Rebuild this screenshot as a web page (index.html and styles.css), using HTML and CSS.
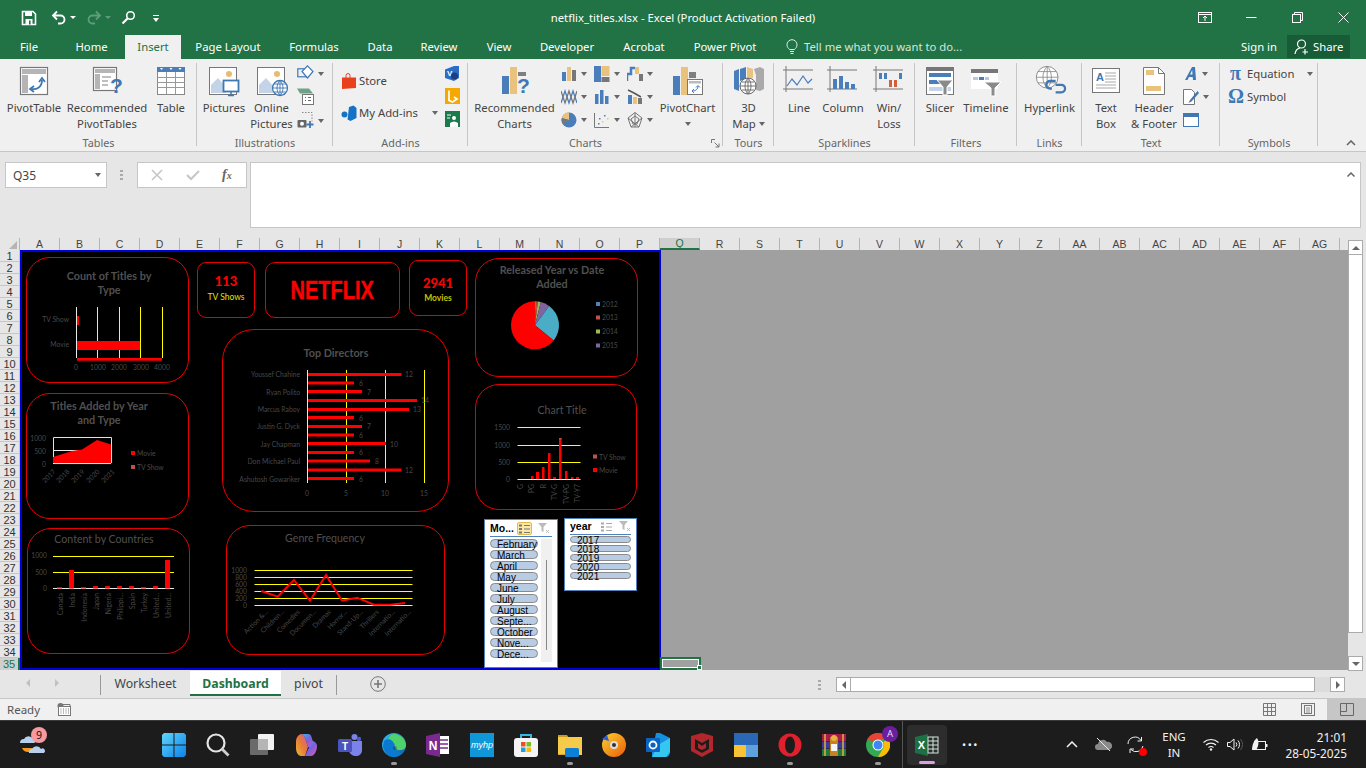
FILE: index.html
```html
<!DOCTYPE html>
<html lang="en">
<head>
<meta charset="utf-8">
<title>netflix_titles.xlsx - Excel</title>
<link rel="stylesheet" href="styles.css">
</head>
<body>
<div class="app">

<header class="titlebar">
  <div class="qat">
    <svg class="q-save" width="16" height="16" viewBox="0 0 16 16"><path d="M1.500 1.500h10.500l2.500 2.500v10.500h-13z" fill="none" stroke="#fff" stroke-width="1.600"/><rect x="4" y="1.500" width="7" height="4.500" fill="#fff"/><rect x="4.500" y="9" width="7" height="5.500" fill="#fff"/><rect x="8" y="10.500" width="1.600" height="4" fill="#217346"/></svg>
    <svg class="q-undo" width="16" height="16" viewBox="0 0 16 16"><path d="M6 1.500 2 5.500l4 4M2.500 5.500h7a4 4 0 0 1 0 8H7" fill="none" stroke="#fff" stroke-width="1.800"/></svg>
    <span class="q-caret"></span>
    <svg class="q-redo" width="16" height="16" viewBox="0 0 16 16"><path d="M10 1.500l4 4-4 4M13.500 5.500h-7a4 4 0 0 0 0 8H9" fill="none" stroke="#5f9c7c" stroke-width="1.800"/></svg>
    <span class="q-caret dim"></span>
    <svg class="q-touch" width="15" height="15" viewBox="0 0 15 15"><circle cx="9.500" cy="5.500" r="3.800" fill="none" stroke="#fff" stroke-width="1.600"/><path d="M6.500 8.500 1.500 13.500" stroke="#fff" stroke-width="2.200"/></svg>
    <svg class="q-more" width="8" height="8" viewBox="0 0 8 8"><path d="M1 0.500h6" stroke="#fff"/><path d="M1 3h6L4 7z" fill="#fff"/></svg>
  </div>
  <div class="doc-title">netflix_titles.xlsx - Excel (Product Activation Failed)</div>
  <div class="winctl">
    <svg width="14" height="11" viewBox="0 0 14 11"><rect x=".5" y=".5" width="13" height="10" fill="none" stroke="#fff"/><path d="M.5 2.500h13M7 9V4M5 6l2-2 2 2" fill="none" stroke="#fff"/></svg>
    <svg width="11" height="11" viewBox="0 0 11 11"><path d="M0 5.500h10.500" stroke="#fff"/></svg>
    <svg width="11" height="11" viewBox="0 0 11 11"><rect x=".5" y="2.500" width="8" height="8" fill="none" stroke="#fff"/><path d="M2.500 2.500v-2h8v8h-2" fill="none" stroke="#fff"/></svg>
    <svg width="11" height="11" viewBox="0 0 11 11"><path d="M.5.500l10 10M10.500.500l-10 10" stroke="#fff"/></svg>
  </div>
</header>

<nav class="tabs">
  <span class="tab">File</span><span class="tab">Home</span><span class="tab tab-on">Insert</span><span class="tab">Page Layout</span><span class="tab">Formulas</span><span class="tab">Data</span><span class="tab">Review</span><span class="tab">View</span><span class="tab">Developer</span><span class="tab">Acrobat</span><span class="tab">Power Pivot</span>
  <span class="tell"><svg width="12" height="16" viewBox="0 0 12 16"><path d="M3.500 10.500C2 9 1 8 1 5.700a5 5 0 0 1 10 0c0 2.300-1 3.300-2.500 4.800zM4 12.500h4M4.500 14.500h3" fill="none" stroke="#dfeee6" stroke-width="1"/></svg>Tell me what you want to do...</span>
  <span class="signin">Sign in</span>
  <span class="share"><svg width="16" height="16" viewBox="0 0 16 16"><circle cx="7.500" cy="5" r="4" fill="none" stroke="#fff" stroke-width="1.200"/><path d="M1 15c.5-3.500 2.500-5.500 5-6M11 10v5.500M8.500 13h5.500" fill="none" stroke="#fff" stroke-width="1.200"/></svg>Share</span>
</nav>

<section class="ribbon">
  <div class="group g-tables">
    <div class="body">
      <div class="big w68"><svg class="ic" width="32" height="32" viewBox="0 0 32 32"><rect x="2.500" y="2.500" width="27" height="27" fill="#fff" stroke="#777" stroke-width="1.200"/><rect x="4" y="4" width="24" height="5" fill="#b5b5b5"/><rect x="4" y="10" width="6" height="18" fill="#b5b5b5"/><path d="M13 24c6 1 11-2 11-9" fill="none" stroke="#3f78b5" stroke-width="1.800"/><path d="M21 17l3-4 3 4M16 21l-4 3 4 3" fill="none" stroke="#3f78b5" stroke-width="1.800"/></svg><span>PivotTable</span></div>
      <div class="big w78"><svg class="ic" width="32" height="32" viewBox="0 0 32 32"><rect x="2.500" y="2.500" width="23" height="23" fill="#fff" stroke="#777" stroke-width="1.200"/><rect x="4" y="4" width="20" height="4" fill="#b5b5b5"/><rect x="4" y="9" width="5" height="15" fill="#b5b5b5"/><path d="M11 12h9M11 16h6M11 20h6" stroke="#aaa" stroke-width="1.500"/><text class="ques" x="19" y="28">?</text></svg><span>Recommended<br>PivotTables</span></div>
      <div class="big w50"><svg class="ic" width="32" height="32" viewBox="0 0 32 32"><rect x="2.500" y="2.500" width="27" height="27" fill="#fff" stroke="#888"/><rect x="2" y="2" width="28" height="5" fill="#4a7ebb"/><path d="M2.500 12.500h27M2.500 17.500h27M2.500 22.500h27M11.500 7v22M20.500 7v22" stroke="#999"/><path d="M5 3h3L6.500 5zM14.500 3h3L16 5zM23.500 3h3L25 5z" fill="#fff"/></svg><span>Table</span></div>
    </div>
    <div class="glabel">Tables</div>
  </div>

  <div class="group g-illus">
    <div class="body">
      <div class="big w54"><svg class="ic" width="32" height="32" viewBox="0 0 32 32"><rect x="1.500" y="2.500" width="27" height="27" fill="#fff" stroke="#777"/><circle cx="21" cy="9" r="3" fill="#e8bb70"/><path d="M3 28V20l7-7 8 9v6z" fill="#c3d4e8"/><rect x="15.500" y="15.500" width="15" height="11" fill="#fff" stroke="#3f78b5" stroke-width="1.800"/><path d="M20 30.500h6M23 27v3" stroke="#3f78b5" stroke-width="1.500"/></svg><span>Pictures</span></div>
      <div class="big w41"><svg class="ic" width="32" height="32" viewBox="0 0 32 32"><rect x="1.500" y="2.500" width="27" height="27" fill="#fff" stroke="#777"/><circle cx="21" cy="9" r="3" fill="#e8bb70"/><path d="M3 28V20l7-7 8 9v6z" fill="#c3d4e8"/><circle cx="24" cy="23" r="7.500" fill="#fff" stroke="#3f78b5" stroke-width="1.300"/><path d="M16.500 23h15M24 15.500v15M18 19h12M18 27h12M24 15.500c-4 4-4 11 0 15M24 15.500c4 4 4 11 0 15" fill="none" stroke="#3f78b5" stroke-width=".9"/></svg><span>Online<br>Pictures</span></div>
      <div class="stack s-illus">
        <div class="si"><svg width="17" height="17" viewBox="0 0 17 17"><rect x=".8" y="3.800" width="9" height="8" fill="none" stroke="#3f78b5" stroke-width="1.200"/><path d="M10.500.8 16 6.500 10.500 13 5 6.500z" fill="#fff" stroke="#3f78b5" stroke-width="1.200"/></svg><i class="car"></i></div>
        <div class="si"><svg width="17" height="17" viewBox="0 0 17 17"><path d="M0 .5h12l4 5H3z" fill="#6fa287"/><rect x="5.500" y="6.500" width="11" height="10" fill="#fff" stroke="#777"/><path d="M8 9.500h1M11 9.500h3M8 12.500h1M11 12.500h3" stroke="#666"/></svg></div>
        <div class="si"><svg width="17" height="17" viewBox="0 0 17 17"><path d="M5 .5h10v9" fill="none" stroke="#888" stroke-dasharray="1.500 1.500"/><rect x=".5" y="8" width="9" height="7.500" rx="1" fill="#666"/><circle cx="5" cy="11.700" r="2" fill="#fff"/><path d="M13 9v7M9.500 12.500h7" stroke="#3f78b5" stroke-width="1.800"/></svg><i class="car"></i></div>
      </div>
    </div>
    <div class="glabel">Illustrations</div>
  </div>

  <div class="group g-addins">
    <div class="body">
      <div class="stack s-addin">
        <div class="row-btn"><svg width="16" height="17" viewBox="0 0 16 17"><path d="M1 4.500h14v10.500l-14 1z" fill="#e8401c"/><path d="M5 5V2.500a2 2 0 0 1 4 0V5" fill="none" stroke="#e8401c"/></svg><span>Store</span></div>
        <div class="row-btn"><svg width="16" height="17" viewBox="0 0 16 17"><path d="M8 2l4.500-1.500L15.500 3v10l-6 3-3-1.500z" fill="#1672c4"/><circle cx="3.500" cy="9.500" r="3" fill="#1672c4"/></svg><span>My Add-ins</span><i class="car c-addin"></i></div>
      </div>
      <div class="stack s-apps">
        <svg width="15" height="15" viewBox="0 0 15 15"><path d="M0 3.500 9 0h5v12l-5 3-9-3z" fill="#2b6cc4"/><text class="vtxt" x="2" y="10">V</text><circle cx="9.500" cy="10" r="3.500" fill="#1d3f80"/></svg>
        <svg width="15" height="16" viewBox="0 0 15 16"><rect width="15" height="16" fill="#f5a800"/><path d="M4 2.500v10l3.500 1.500 4.500-3-3-2" fill="none" stroke="#fff" stroke-width="1.700"/></svg>
        <svg width="15" height="16" viewBox="0 0 15 16"><rect width="15" height="16" fill="#1a7a4e"/><circle cx="9" cy="7" r="2" fill="#fff"/><path d="M5 16v-4q4-3 8 0v4z" fill="#fff"/><path d="M2 4h4M2 7h3" stroke="#fff"/></svg>
      </div>
    </div>
    <div class="glabel">Add-ins</div>
  </div>

  <div class="group g-charts">
    <div class="body">
      <div class="big w94"><svg class="ic" width="32" height="32" viewBox="0 0 32 32"><rect x="3" y="11" width="7" height="18" fill="#4a7ebb"/><rect x="11" y="2" width="7" height="27" fill="#e9c27d"/><rect x="19" y="7" width="8" height="4" fill="#7f7f7f"/><text class="ques" x="18" y="28">?</text></svg><span>Recommended<br>Charts</span></div>
      <div class="mini-grid">
        <div class="si"><svg width="16" height="16" viewBox="0 0 16 16"><rect x="1" y="6" width="4" height="9" fill="#4a7ebb"/><rect x="6" y="1" width="4" height="14" fill="#e9c27d"/><rect x="11" y="4" width="4" height="11" fill="#777"/></svg><i class="car"></i></div>
        <div class="si"><svg width="16" height="16" viewBox="0 0 16 16"><rect y="0" width="7" height="16" fill="#4a7ebb"/><rect x="7.500" y="0" width="8" height="10" fill="#e9c27d"/><rect x="7.500" y="11" width="8" height="5" fill="#777"/></svg><i class="car"></i></div>
        <div class="si"><svg width="16" height="16" viewBox="0 0 16 16"><path d="M0 15V8h4V2h4" fill="none" stroke="#4a7ebb" stroke-width="2.500"/><rect x="8" y="1" width="4" height="7" fill="#e9c27d"/><rect x="12" y="8" width="4" height="7" fill="#777"/></svg><i class="car"></i></div>
        <div class="si"><svg width="16" height="16" viewBox="0 0 16 16"><path d="M0 14 4 2l4 12 4-12 4 12" fill="none" stroke="#4a7ebb" stroke-width="1.300"/><path d="M0 2l4 12 4-12 4 12 4-12" fill="none" stroke="#777" stroke-width="1.300"/></svg><i class="car"></i></div>
        <div class="si"><svg width="16" height="16" viewBox="0 0 16 16"><path d="M1 5h3.500v10H1zM6 1h3.500v14H6zM11 7h3.500v8H11z" fill="#4a7ebb"/></svg><i class="car"></i></div>
        <div class="si"><svg width="16" height="16" viewBox="0 0 16 16"><rect x="1" y="6" width="4" height="9" fill="#4a7ebb"/><rect x="6" y="8" width="4" height="7" fill="#e9c27d"/><rect x="11" y="9" width="4" height="6" fill="#777"/><path d="M1 1l6 3 7 4" fill="none" stroke="#555" stroke-width="1.500"/></svg><i class="car"></i></div>
        <div class="si"><svg width="16" height="16" viewBox="0 0 16 16"><circle cx="8" cy="8" r="7.500" fill="#4a7ebb"/><path d="M8 8V.5A7.500 7.500 0 0 0 .8 6z" fill="#e9c27d"/><path d="M8 8 .8 6a7.500 7.500 0 0 0 1.200 6.500z" fill="#777"/></svg><i class="car"></i></div>
        <div class="si"><svg width="16" height="16" viewBox="0 0 16 16"><path d="M.5 1v14.500H15" fill="none" stroke="#777"/><path d="M5 6h1.500v1.500H5zM10 3h1.500v1.500H10z" fill="#4a7ebb"/><path d="M8 9h1.500v1.500H8zM13 6h1.500v1.500H13z" fill="#e9c27d"/><path d="M4 11h1.500v1.500H4z" fill="#4a7ebb"/></svg><i class="car"></i></div>
        <div class="si"><svg width="16" height="16" viewBox="0 0 16 16"><path d="M8 .5 15 6l-3 9H4L1 6zM8 .5V15M1 6l11 9M15 6 4 15" fill="none" stroke="#777"/><path d="M8 4l4 3-2 5H6L4 7z" fill="none" stroke="#777"/></svg><i class="car"></i></div>
      </div>
      <div class="big w60"><svg class="ic" width="32" height="32" viewBox="0 0 32 32"><rect x="1" y="11" width="7" height="19" fill="#4a7ebb"/><rect x="9" y="2" width="7" height="28" fill="#e9c27d"/><rect x="17" y="7" width="7" height="6" fill="#7f7f7f"/><rect x="15.500" y="14.500" width="15" height="15" fill="#fff" stroke="#777"/><rect x="17" y="16" width="12" height="2.500" fill="#bbb"/><path d="M20 26c4 0 6-2 6-5M24 22.500l2-2 2 2M22 24l-2 2 2 2" fill="none" stroke="#3f78b5"/></svg><span class="pc">PivotChart<i class="car c-under"></i></span></div>
    </div>
    <div class="glabel gl-charts">Charts<svg class="launcher" width="9" height="9" viewBox="0 0 9 9"><path d="M.5 4V.5H4" fill="none" stroke="#777"/><path d="M8 8 3.500 3.500M8 4.500V8H4.500" fill="none" stroke="#777"/></svg></div>
  </div>

  <div class="group g-tours">
    <div class="body">
      <div class="big wfull"><svg class="ic" width="32" height="32" viewBox="0 0 32 32"><path d="M1 6l5-2v22l-5-2z" fill="#4a7ebb"/><path d="M7 4l6-2v12l-6 2zM7 24h4" fill="#4a7ebb"/><path d="M14 2l6 2v9l-6-1z" fill="#e9c27d"/><path d="M21 4l6-2 4 2v20l-4 2-4-1V10z" fill="#aaa"/><circle cx="15" cy="21" r="8" fill="#fff" stroke="#666"/><path d="M7 21h16M15 13v16M9 17h12M9 25h12M15 13c-4 4-4 12 0 16M15 13c4 4 4 12 0 16" fill="none" stroke="#666" stroke-width=".9"/></svg><span>3D<br>Map<i class="car c-inl"></i></span></div>
    </div>
    <div class="glabel">Tours</div>
  </div>

  <div class="group g-spark">
    <div class="body">
      <div class="big w50"><svg class="ic" width="32" height="32" viewBox="0 0 32 32"><path d="M3 1v26M0 5h30M0 24h30" stroke="#777"/><path d="M4 21l5-7 5 6 6-9 5 7 4-4" fill="none" stroke="#4a7ebb" stroke-width="1.200"/></svg><span>Line</span></div>
      <div class="big w44 sp-col"><svg class="ic" width="32" height="32" viewBox="0 0 32 32"><path d="M3 1v26M0 5h30M0 24h30" stroke="#777"/><path d="M6 14h4v10H6zM12 11h4v13h-4zM18 17h4v7h-4zM24 19h4v5h-4z" fill="#4a7ebb"/></svg><span>Column</span></div>
      <div class="big w46 sp-win"><svg class="ic" width="32" height="32" viewBox="0 0 32 32"><path d="M3 1v26M0 5h30M0 24h30" stroke="#777"/><path d="M6 8h3v6H6zM11 8h3v6h-3zM26 8h3v6h-3z" fill="#4a7ebb"/><path d="M16 15h3v7h-3zM21 15h3v7h-3z" fill="#d2603f"/></svg><span>Win/<br>Loss</span></div>
    </div>
    <div class="glabel">Sparklines</div>
  </div>

  <div class="group g-filters">
    <div class="body">
      <div class="big w50"><svg class="ic" width="32" height="32" viewBox="0 0 32 32"><rect x="2.500" y="2.500" width="27" height="27" fill="#fff" stroke="#777"/><rect x="2" y="2" width="28" height="4" fill="#777"/><rect x="5" y="8" width="22" height="4" fill="#4a7ebb"/><rect x="5" y="15" width="12" height="4" fill="#4a7ebb"/><rect x="5" y="22" width="22" height="4" fill="#c3d4e8"/><path d="M13 15h16l-6 7v8h-4v-8z" fill="#8a8a8a" stroke="#fff"/></svg><span>Slicer</span></div>
      <div class="big w44 ofv"><svg class="ic" width="32" height="32" viewBox="0 0 32 32"><path d="M1 5h27v19H1z" fill="#fff"/><rect x="1" y="4" width="27" height="4" fill="#777"/><path d="M3 12h5v3H3zM15 12h4v3h-4z" fill="#b5c9e0"/><path d="M9 12h5v3H9z" fill="#4a7ebb"/><path d="M14 17h17l-6 6v8h-4v-8z" fill="#8a8a8a" stroke="#fff"/></svg><span>Timeline</span></div>
    </div>
    <div class="glabel">Filters</div>
  </div>

  <div class="group g-links">
    <div class="body">
      <div class="big wfull"><svg class="ic" width="34" height="34" viewBox="0 0 34 34"><circle cx="14" cy="13" r="11.500" fill="#fff" stroke="#888"/><path d="M2.500 13h23M14 1.500v23M4 7h20M4 19h20M14 1.500c-6 6-6 17 0 23M14 1.500c6 6 6 17 0 23" fill="none" stroke="#888" stroke-width=".9"/><path d="M20 26h-2a4 4 0 0 1 0-8h6M24 22h6a4 4 0 0 1 0 8h-6" transform="translate(-1 -1)" fill="none" stroke="#3f78b5" stroke-width="2.400"/></svg><span>Hyperlink</span></div>
    </div>
    <div class="glabel">Links</div>
  </div>

  <div class="group g-text">
    <div class="body">
      <div class="big w48"><svg class="ic" width="32" height="32" viewBox="0 0 32 32"><rect x="2.500" y="3.500" width="27" height="24" fill="#fff" stroke="#777"/><text class="atxt" x="6" y="16">A</text><path d="M15 8h11M15 11h11M15 14h11M15 17h11M6 20h20M6 23h20" stroke="#aaa"/></svg><span>Text<br>Box</span></div>
      <div class="big w48"><svg class="ic" width="32" height="32" viewBox="0 0 32 32"><path d="M5.500 2.500h15l6 6v21h-21z" fill="#fff" stroke="#777"/><path d="M20.500 2.500v6h6" fill="none" stroke="#777"/><rect x="8" y="5" width="8" height="5" fill="#e9c27d"/><rect x="8" y="21" width="15" height="5" fill="#e9c27d"/></svg><span>Header<br>&amp; Footer</span></div>
      <div class="stack s-text">
        <div class="si"><svg width="15" height="15" viewBox="0 0 15 15"><path d="M2 14 9 1h3l1 13h-3l-.3-3H6l-1.500 3zM7 8.500h2.500L9.200 4z" fill="#3f78b5"/></svg><i class="car"></i></div>
        <div class="si"><svg width="16" height="16" viewBox="0 0 16 16"><path d="M.5.500h8l3 3v12h-11z" fill="#fff" stroke="#777"/><path d="M14.500 2 7 11l-1.500 3 3-1.500L16 4z" fill="#3f78b5"/></svg><i class="car"></i></div>
        <div class="si"><svg width="16" height="14" viewBox="0 0 16 14"><rect x=".5" y=".5" width="15" height="13" fill="#fff" stroke="#3f78b5"/><rect width="16" height="4" fill="#3f78b5"/></svg></div>
      </div>
    </div>
    <div class="glabel">Text</div>
  </div>

  <div class="group g-sym">
    <div class="body">
      <div class="stack s-sym">
        <div class="sym-row"><span class="glyph">π</span><span>Equation</span><i class="car"></i></div>
        <div class="sym-row"><span class="glyph">Ω</span><span>Symbol</span></div>
      </div>
    </div>
    <div class="glabel">Symbols</div>
  </div>
  <div class="collapse"><svg width="10" height="6" viewBox="0 0 10 6"><path d="M1 5l4-4 4 4" fill="none" stroke="#666" stroke-width="1.600"/></svg></div>
</section>

<section class="formula">
  <div class="namebox"><span>Q35</span><i class="car"></i></div>
  <div class="grip"></div>
  <div class="fxbox">
    <svg width="12" height="12" viewBox="0 0 12 12"><path d="M1 1l10 10M11 1 1 11" stroke="#c6c6c6" stroke-width="1.600"/></svg>
    <svg width="14" height="12" viewBox="0 0 14 12"><path d="M1 6l4 4 8-8" fill="none" stroke="#c6c6c6" stroke-width="2"/></svg>
    <span class="fx">f<small>x</small></span>
  </div>
  <div class="fbar"><svg width="8" height="5" viewBox="0 0 8 5"><path d="M.5 4.500 4 1l3.500 3.500" fill="none" stroke="#666" stroke-width="1.500"/></svg></div>
</section>

<section class="workarea">
  <div class="sheet">
    <div class="colhead">
      <span class="corner"><i></i></span>
      <span>A</span><span>B</span><span>C</span><span>D</span><span>E</span><span>F</span><span>G</span><span>H</span><span>I</span><span>J</span><span>K</span><span>L</span><span>M</span><span>N</span><span>O</span><span>P</span><span class="sel">Q</span><span>R</span><span>S</span><span>T</span><span>U</span><span>V</span><span>W</span><span>X</span><span>Y</span><span>Z</span><span>AA</span><span>AB</span><span>AC</span><span>AD</span><span>AE</span><span>AF</span><span>AG</span>
    </div>
    <div class="sheetbody">
      <div class="rowhead">
        <span>1</span><span>2</span><span>3</span><span>4</span><span>5</span><span>6</span><span>7</span><span>8</span><span>9</span><span>10</span><span>11</span><span>12</span><span>13</span><span>14</span><span>15</span><span>16</span><span>17</span><span>18</span><span>19</span><span>20</span><span>21</span><span>22</span><span>23</span><span>24</span><span>25</span><span>26</span><span>27</span><span>28</span><span>29</span><span>30</span><span>31</span><span>32</span><span>33</span><span>34</span><span class="sel">35</span>
      </div>
      <div class="grid-area">
        <div class="dash">

          <div class="card c-type"><svg viewBox="26 257 163 126">
            <text class="ttl" x="109" y="280">Count of Titles by</text><text class="ttl" x="109" y="294">Type</text>
            <g class="yel"><path d="M97.500 307v51M119.500 307v51M140.500 307v51M162.500 307v51"/></g>
            <path class="wht" d="M76.500 307v51"/>
            <rect class="red" x="77" y="316" width="2" height="9"/><rect class="red" x="77" y="341" width="63" height="9"/>
            <rect x="77" y="358" width="85" height="3.500" fill="url(#glow)"/>
            <text class="ax end" x="69" y="322">TV Show</text><text class="ax end" x="69" y="347">Movie</text>
            <text class="ax mid" x="76" y="370">0</text><text class="ax mid" x="98" y="370">1000</text><text class="ax mid" x="119" y="370">2000</text><text class="ax mid" x="141" y="370">3000</text><text class="ax mid" x="162" y="370">4000</text>
            <defs><linearGradient id="glow" x1="0" y1="0" x2="0" y2="1"><stop offset=".4" stop-color="#f00"/><stop offset="1" stop-color="#600"/></linearGradient></defs>
          </svg></div>

          <div class="card c-added"><svg viewBox="26 393 163 126">
            <text class="ttl" x="99" y="410">Titles Added by Year</text><text class="ttl" x="99" y="424">and Type</text>
            <path class="yel" d="M53.500 463.500V437.500H111.500V463"/>
            <path class="wht" d="M53 450.500h58"/>
            <path class="red" d="M53 457 72 451l10-1.500L97 440l14 4.500V463H53z"/>
            <path class="wht" d="M53 463.500h58"/>
            <text class="ax end" x="46" y="441">1000</text><text class="ax end" x="46" y="454">500</text><text class="ax end" x="46" y="467">0</text>
            <g class="ax"><text transform="rotate(-45 54 470)" class="end" x="54" y="473">2017</text><text transform="rotate(-45 68 470)" class="end" x="68" y="473">2018</text><text transform="rotate(-45 83 470)" class="end" x="83" y="473">2019</text><text transform="rotate(-45 98 470)" class="end" x="98" y="473">2020</text><text transform="rotate(-45 113 470)" class="end" x="113" y="473">2021</text></g>
            <rect class="red" x="131" y="451" width="4" height="4"/><text class="ax" x="137" y="455.500">Movie</text>
            <rect x="131" y="465" width="4" height="4" fill="#c0504d"/><text class="ax" x="137" y="469.500">TV Show</text>
          </svg></div>

          <div class="card c-country"><svg viewBox="27 528 163 126">
            <text class="ttl thin" x="104" y="543">Content by Countries</text>
            <path class="yel" d="M53 556.500h121M53 572.500h121"/><path class="wht" d="M53 588.500h121"/>
            <text class="ax end" x="47" y="558">1000</text><text class="ax end" x="47" y="574.500">500</text><text class="ax end" x="47" y="591">0</text>
            <g class="red"><rect x="57" y="587" width="5" height="1.500"/><rect x="69" y="570" width="5" height="18.500"/><rect x="81" y="587" width="5" height="1.500"/><rect x="93" y="586" width="5" height="2.500"/><rect x="105" y="586" width="5" height="2.500"/><rect x="117" y="586" width="5" height="2.500"/><rect x="129" y="586" width="5" height="2.500"/><rect x="141" y="587" width="5" height="1.500"/><rect x="153" y="586" width="5" height="2.500"/><rect x="165" y="560" width="5" height="28.500"/></g>
            <g class="ax end"><text transform="rotate(-90 63 593)" x="63" y="593">Canada</text><text transform="rotate(-90 75 593)" x="75" y="593">India</text><text transform="rotate(-90 87 593)" x="87" y="593">Indonesia</text><text transform="rotate(-90 99 593)" x="99" y="593">Japan</text><text transform="rotate(-90 111 593)" x="111" y="593">Nigeria</text><text transform="rotate(-90 123 593)" x="123" y="593">Philippi...</text><text transform="rotate(-90 135 593)" x="135" y="593">Spain</text><text transform="rotate(-90 147 593)" x="147" y="593">Turkey</text><text transform="rotate(-90 159 593)" x="159" y="593">United...</text><text transform="rotate(-90 171 593)" x="171" y="593">United...</text></g>
          </svg></div>

          <div class="card kpi k-tv"><strong>113</strong><span>TV Shows</span></div>
          <div class="card banner"><span>NETFLIX</span></div>
          <div class="card kpi k-mov"><strong>2941</strong><span>Movies</span></div>

          <div class="card c-dir"><svg viewBox="222 329 227 183">
            <text class="ttl" x="336" y="357">Top Directors</text>
            <path class="yel" d="M346.500 370v113M385.500 370v113M424.500 370v113"/>
            <path class="wht" d="M307.500 370v113"/>
            <g class="red"><rect x="308" y="373" width="93.500" height="3"/><rect x="308" y="381.500" width="46" height="3"/><rect x="308" y="390" width="54" height="3"/><rect x="308" y="399" width="109" height="3"/><rect x="308" y="408" width="101" height="3"/><rect x="308" y="416" width="46" height="3"/><rect x="308" y="425" width="54" height="3"/><rect x="308" y="433.500" width="46" height="3"/><rect x="308" y="442" width="78" height="3"/><rect x="308" y="451" width="46" height="3"/><rect x="308" y="459.500" width="62" height="3"/><rect x="308" y="468.500" width="93.500" height="3"/><rect x="308" y="477" width="46" height="3"/></g>
            <g class="ax end"><text x="300" y="377">Youssef Chahine</text><text x="300" y="394.500">Ryan Polito</text><text x="300" y="412">Marcus Raboy</text><text x="300" y="429">Justin G. Dyck</text><text x="300" y="446.500">Jay Chapman</text><text x="300" y="464">Don Michael Paul</text><text x="300" y="481.500">Ashutosh Gowariker</text></g>
            <g class="ax"><text x="405" y="377">12</text><text x="359" y="386">6</text><text x="367" y="394.500">7</text><text x="421" y="403">14</text><text x="413" y="412">13</text><text x="359" y="420.500">6</text><text x="367" y="429">7</text><text x="359" y="438">6</text><text x="390" y="446.500">10</text><text x="359" y="455">6</text><text x="375" y="464">8</text><text x="405" y="473">12</text><text x="359" y="481.500">6</text></g>
            <g class="ax mid"><text x="307" y="495.500">0</text><text x="346" y="495.500">5</text><text x="385" y="495.500">10</text><text x="424" y="495.500">15</text></g>
          </svg></div>

          <div class="card c-year"><svg viewBox="475 258 163 119">
            <text class="ttl" x="552" y="274">Released Year vs Date</text><text class="ttl" x="552" y="288">Added</text>
            <path d="M535 325.300 535 301.300A24 24 0 0 1 536.300 301.300z" fill="#4f81bd"/>
            <path d="M535 325.300 536.300 301.300A24 24 0 0 1 537.900 301.500z" fill="#c0504d"/>
            <path d="M535 325.300 537.900 301.500A24 24 0 0 1 540.800 302z" fill="#9bbb59"/>
            <path d="M535 325.300 540.800 302A24 24 0 0 1 549.100 305.900z" fill="#8064a2"/>
            <path d="M535 325.300 549.100 305.900A24 24 0 0 1 553.700 340.400z" fill="#4bacc6"/>
            <path class="red" d="M535 325.300 553.700 340.400A24 24 0 1 1 535 301.300z"/>
            <rect x="596" y="302" width="4" height="4" fill="#4f81bd"/><text class="ax" x="602" y="306.500">2012</text>
            <rect x="596" y="315.500" width="4" height="4" fill="#c0504d"/><text class="ax" x="602" y="320">2013</text>
            <rect x="596" y="329.500" width="4" height="4" fill="#9bbb59"/><text class="ax" x="602" y="334">2014</text>
            <rect x="596" y="343.500" width="4" height="4" fill="#8064a2"/><text class="ax" x="602" y="348">2015</text>
          </svg></div>

          <div class="card c-rating"><svg viewBox="475 384 162 126">
            <text class="ttl thin" x="562" y="414">Chart Title</text>
            <path class="yel" d="M517.500 427.500h63M517.500 445.500h63M517.500 462.500h63"/><path class="wht" d="M517.500 479.500h63"/>
            <text class="ax end" x="510" y="430">1500</text><text class="ax end" x="510" y="448">1000</text><text class="ax end" x="510" y="465">500</text><text class="ax end" x="510" y="482">0</text>
            <g class="red"><rect x="531" y="476" width="2.500" height="3"/><rect x="536" y="472" width="3" height="7"/><rect x="542" y="467" width="2.500" height="12"/><rect x="548" y="453" width="2.500" height="26"/><rect x="553" y="477" width="3" height="2"/><rect x="559" y="438" width="2.500" height="41"/><rect x="565" y="471" width="2.500" height="8"/><rect x="571" y="477" width="2.500" height="2"/><rect x="576" y="477" width="3" height="2"/></g>
            <rect x="559" y="438" width="2.500" height="1.500" fill="#c0504d"/>
            <g class="ax end"><text transform="rotate(-90 523 484)" x="523" y="484">G</text><text transform="rotate(-90 534 484)" x="534" y="484">PG</text><text transform="rotate(-90 546 484)" x="546" y="484">R</text><text transform="rotate(-90 557 484)" x="557" y="484">TV-G</text><text transform="rotate(-90 569 484)" x="569" y="484">TV-PG</text><text transform="rotate(-90 580 484)" x="580" y="484">TV-Y7</text></g>
            <rect x="593" y="454.500" width="4" height="4" fill="#c0504d"/><text class="ax" x="599" y="459.500">TV Show</text>
            <rect class="red" x="593" y="468" width="4" height="4"/><text class="ax" x="599" y="473">Movie</text>
          </svg></div>

          <div class="card c-genre"><svg viewBox="226 525 219 130">
            <text class="ttl thin" x="325" y="542">Genre Frequency</text>
            <path class="yel" d="M254.500 570.500h158M254.500 577.500h158M254.500 584.500h158M254.500 591.500h158M254.500 598.500h158"/><path class="wht" d="M254.500 605.500h158"/>
            <g class="ax end"><text x="247" y="573">1000</text><text x="247" y="580">800</text><text x="247" y="587">600</text><text x="247" y="594">400</text><text x="247" y="601">200</text><text x="247" y="608">0</text></g>
            <path d="M261.300 591 277.700 596.700 294 580 310 600.700 326 575 342 600.700 357 597.700 374 604.700 390 604.700 405 603" fill="none" stroke="#f00" stroke-width="2"/>
            <g class="ax end"><text transform="rotate(-45 267 611)" x="267" y="613">Action &amp;...</text><text transform="rotate(-45 283 611)" x="283" y="613">Children...</text><text transform="rotate(-45 299 611)" x="299" y="613">Comedies</text><text transform="rotate(-45 315 611)" x="315" y="613">Documen...</text><text transform="rotate(-45 330 611)" x="330" y="613">Dramas</text><text transform="rotate(-45 346 611)" x="346" y="613">Horror...</text><text transform="rotate(-45 362 611)" x="362" y="613">Stand-Up...</text><text transform="rotate(-45 378 611)" x="378" y="613">Thrillers</text><text transform="rotate(-45 394 611)" x="394" y="613">Internatio...</text><text transform="rotate(-45 410 611)" x="410" y="613">Internatio...</text></g>
          </svg></div>

          <div class="slicer s-month">
            <div class="sl-head"><b>Mo...</b><span class="ms on"><svg width="11" height="11" viewBox="0 0 11 11"><path d="M0 1.500h3v2H0zM0 5h3v2H0zM0 8.500h3v2H0z" fill="#777"/><path d="M5 2.500h6M5 6h6M5 9.500h6" stroke="#777"/></svg></span><svg class="fl" width="12" height="11" viewBox="0 0 12 11"><path d="M0 0h9L5.500 4v5l-2-1V4z" fill="#bbb"/><path d="M8 7l3 3M11 7l-3 3" stroke="#bbb"/></svg></div>
            <div class="sl-body">
              <ul><li>February</li><li>March</li><li>April</li><li>May</li><li>June</li><li>July</li><li>August</li><li>Septe...</li><li>October</li><li>Nove...</li><li>Dece...</li></ul>
              <div class="sl-scroll"><i></i></div>
            </div>
          </div>
          <div class="slicer s-yr">
            <div class="sl-head"><b>year</b><span class="ms"><svg width="11" height="11" viewBox="0 0 11 11"><path d="M0 1.500h3v2H0zM0 5h3v2H0zM0 8.500h3v2H0z" fill="#aaa"/><path d="M5 2.500h6M5 6h6M5 9.500h6" stroke="#aaa"/></svg></span><svg class="fl" width="12" height="11" viewBox="0 0 12 11"><path d="M0 0h9L5.500 4v5l-2-1V4z" fill="#bbb"/><path d="M8 7l3 3M11 7l-3 3" stroke="#bbb"/></svg></div>
            <ul><li>2017</li><li>2018</li><li>2019</li><li>2020</li><li>2021</li></ul>
          </div>
        </div>
        <div class="emptygray"></div>
        <div class="cellsel"><i></i></div>
      </div>
    </div>
  </div>
  <div class="vscroll">
    <span class="sb-btn"><i class="tri up"></i></span>
    <span class="sb-thumb"></span>
    <span class="sb-btn"><i class="tri down"></i></span>
  </div>
</section>

<section class="sheettabs">
  <div class="nav"><i class="tri left dim"></i><i class="tri right dim"></i></div>
  <div class="stab first">Worksheet</div>
  <div class="stab active">Dashboard</div>
  <div class="stab last">pivot</div>
  <svg class="plus" width="16" height="16" viewBox="0 0 16 16"><circle cx="8" cy="8" r="7.300" fill="none" stroke="#777"/><path d="M8 4v8M4 8h8" stroke="#777" stroke-width="1.600"/></svg>
  <div class="grip tabgrip"></div>
  <div class="hscroll">
    <span class="sb-btn"><i class="tri left"></i></span>
    <span class="sb-thumb"></span>
    <span class="sb-rest"></span>
    <span class="sb-btn"><i class="tri right"></i></span>
  </div>
</section>

<footer class="status">
  <span class="ready">Ready</span>
  <svg width="14" height="13" viewBox="0 0 14 13"><circle cx="3.500" cy="3" r="3" fill="#777"/><rect x="1.500" y="3.500" width="12" height="9" fill="#fff" stroke="#777"/><path d="M5 1.500h8V4" fill="none" stroke="#777"/><path d="M3.500 6h1M6 6h1M8.500 6h1M11 6h1M3.500 8h1M6 8h1M8.500 8h1M11 8h1M3.500 10h1M6 10h1M8.500 10h1M11 10h1" stroke="#777"/></svg>
  <div class="views">
    <span class="view"><svg width="13" height="13" viewBox="0 0 13 13"><path d="M.5.500h12v12H.5zM4.500.5v12M8.500.5v12M.5 4.500h12M.5 8.500h12" fill="none" stroke="#777"/></svg></span>
    <span class="view"><svg width="14" height="13" viewBox="0 0 14 13"><rect x=".5" y=".5" width="13" height="12" fill="none" stroke="#777"/><rect x="3.500" y="2.500" width="7" height="8" fill="none" stroke="#777"/><path d="M5 5h4M5 7h4M5 9h4" stroke="#777" stroke-width=".8"/></svg></span>
    <span class="view on"><svg width="14" height="13" viewBox="0 0 14 13"><path d="M.5.500h13v12H.5zM.5 8.500h6M6.500.5v8" fill="none" stroke="#666"/></svg></span>
  </div>
</footer>

<footer class="taskbar">
  <div class="weather"><svg width="26" height="24" viewBox="0 0 26 24"><path d="M0 10a4 4 0 0 1 4-4 5 5 0 0 1 9 0 2 2 0 0 1 1 4z" fill="#b8d0ef"/><path d="M2 15h12a6.500 6.500 0 0 1-12 0z" fill="#f39b21"/><path d="M9 20a3 3 0 0 1 3-4 5 5 0 0 1 9 0 2.500 2.500 0 0 1 3 4z" fill="#b8d0ef"/></svg><span class="badge">9</span></div>
  <div class="pins">
    <span class="pin"><svg width="24" height="24" viewBox="0 0 24 24"><defs><linearGradient id="win" x1="0" y1="0" x2="1" y2="1"><stop offset="0" stop-color="#5fd5fb"/><stop offset="1" stop-color="#0b82e8"/></linearGradient></defs><path d="M0 2 2 0h9.500v11.500H0zM12.500 0H22l2 2v9.500H12.500zM0 12.500h11.500V24H2l-2-2zM12.500 12.500H24V22l-2 2h-9.500z" fill="url(#win)"/></svg></span>
    <span class="pin"><svg width="24" height="24" viewBox="0 0 24 24"><circle cx="10" cy="10" r="8.500" fill="none" stroke="#e4e4e4" stroke-width="2.200"/><path d="M16 16l6.500 6.500" stroke="#cfcfcf" stroke-width="2.800"/></svg></span>
    <span class="pin"><svg width="24" height="24" viewBox="0 0 24 24"><rect x="0" y="6" width="18" height="16" rx="1" fill="#6a6a6a"/><rect x="8" y="1" width="16" height="16" rx="1" fill="#f2f2f2"/><rect x="8" y="6" width="10" height="11" fill="#b5b5b5"/></svg></span>
    <span class="pin"><svg width="24" height="24" viewBox="0 0 24 24"><defs><linearGradient id="cop" x1="0" y1="0" x2="1" y2="1"><stop offset="0" stop-color="#32b4e8"/><stop offset=".5" stop-color="#7b5fe0"/><stop offset="1" stop-color="#e85bb0"/></linearGradient><linearGradient id="cop2" x1="0" y1="1" x2="1" y2="0"><stop offset="0" stop-color="#f6c035"/><stop offset=".5" stop-color="#f0803a"/><stop offset="1" stop-color="#e55b9f"/></linearGradient></defs><path d="M8 1h6c2 0 3 1 3.500 3l3 10H14L11 5C10 3 9 2 8 1z" fill="url(#cop)"/><path d="M2 8c0-3 2-6 5-7 2 0 3 2 4 4l3 9-3 9H7c-3 0-5-4-5-8z" fill="url(#cop2)" opacity=".95"/><path d="M17 23h-6l7-15c2 0 5 2 5 5 0 5-3 10-6 10z" fill="url(#cop)"/></svg></span>
    <span class="pin"><svg width="24" height="24" viewBox="0 0 24 24"><circle cx="16.500" cy="4" r="3" fill="#7b83eb"/><circle cx="21" cy="6" r="2.200" fill="#5059c9"/><path d="M11 8h13v9c0 4-3 6-6 6s-7-2-7-6z" fill="#7b83eb"/><rect x="0" y="6" width="14" height="13" rx="1.500" fill="#4b53bc"/><text class="tm" x="7" y="16.500">T</text></svg></span>
    <span class="pin dot"><svg width="24" height="24" viewBox="0 0 24 24"><defs><linearGradient id="edge" x1="0" y1="0" x2="1" y2="1"><stop offset="0" stop-color="#35c1f1"/><stop offset="1" stop-color="#0c59a4"/></linearGradient></defs><circle cx="12" cy="12" r="12" fill="url(#edge)"/><path d="M12 1c6 0 12 5 12 11 0 4-3 5-6 5-4 0-6-2-5-5 0-2-3-4-7-2 0 0 0-9 6-9z" fill="#4fd26c"/><path d="M2 8c3-3 9-2 10 3 0 5 3 9 8 9-3 3-6 4-9 4-6-1-9-6-10-11z" fill="#0a7ad0"/><circle cx="13" cy="15" r="2" fill="#1c1c1c" opacity=".35"/></svg></span>
    <span class="pin"><svg width="24" height="24" viewBox="0 0 24 24"><path d="M0 3 14 0v24L0 21z" fill="#7a2a8f"/><rect x="14" y="3" width="9" height="18" fill="#fff"/><path d="M14 7h8M14 11h8M14 15h8" stroke="#7a2a8f" stroke-width="1.500"/><text class="nt" x="7" y="17">N</text></svg></span>
    <span class="pin"><span class="hp">myhp</span></span>
    <span class="pin"><svg width="24" height="24" viewBox="0 0 24 24"><path d="M7 5V2h10v3" fill="none" stroke="#35b8e8" stroke-width="2"/><rect x="0" y="5" width="24" height="19" rx="3" fill="#f4f4f4"/><rect x="7" y="9" width="4.500" height="4.500" fill="#e8502a"/><rect x="12.500" y="9" width="4.500" height="4.500" fill="#7dbb26"/><rect x="7" y="14.500" width="4.500" height="4.500" fill="#1ba1e2"/><rect x="12.500" y="14.500" width="4.500" height="4.500" fill="#fdb900"/></svg></span>
    <span class="pin dot"><svg width="24" height="24" viewBox="0 0 24 24"><path d="M0 2h9l2 3H0z" fill="#c99a1c"/><rect y="4" width="24" height="18" fill="#f6cb4a"/><rect x="7" y="15" width="14" height="9" rx="1.500" fill="#0d7fd6"/><rect y="21" width="7" height="1" fill="#d9a928"/></svg></span>
    <span class="pin"><svg width="24" height="24" viewBox="0 0 24 24"><defs><linearGradient id="disc" x1="0" y1="0" x2="1" y2="1"><stop offset="0" stop-color="#fbd12e"/><stop offset="1" stop-color="#ea5c0a"/></linearGradient></defs><circle cx="12" cy="12" r="12" fill="url(#disc)"/><circle cx="12" cy="12" r="4" fill="#ddd"/><circle cx="12" cy="12" r="2" fill="#333"/><path d="M0 6l5-4 2 6z" fill="#2a5bd0"/></svg></span>
    <span class="pin"><svg width="24" height="24" viewBox="0 0 24 24"><path d="M10 0h4l10 5v14c0 3-2 5-4 5H6V19z" fill="#1490df"/><path d="M12 12l12-7v14l-4 5H6z" fill="#35c7f0"/><rect x="0" y="5" width="14" height="14" rx="1" fill="#0a64c2"/><circle cx="7" cy="12" r="3.500" fill="none" stroke="#fff" stroke-width="1.800"/></svg></span>
    <span class="pin"><svg width="24" height="24" viewBox="0 0 24 24"><path d="M1 3 12 0l11 3v15l-11 6-11-6z" fill="#b1272c"/><path d="M5 6l7 4 7-4v10l-7 4-7-4z" fill="#1c1c1c"/><path d="M8 10l4 3 4-3v5l-4 2-4-2z" fill="#b1272c"/></svg></span>
    <span class="pin"><svg width="24" height="24" viewBox="0 0 24 24"><rect width="24" height="12" fill="#2a67b5"/><rect y="12" width="12" height="12" fill="#f7c235"/><rect x="12" y="12" width="12" height="12" fill="#5ea1dc"/></svg></span>
    <span class="pin dot"><svg width="24" height="24" viewBox="0 0 24 24"><circle cx="12" cy="12" r="11.500" fill="#e0202c"/><ellipse cx="12" cy="12" rx="5" ry="8.500" fill="#1c1c1c"/></svg></span>
    <span class="pin"><svg width="24" height="24" viewBox="0 0 24 24"><rect y="1" width="24" height="7" fill="#a61d4a"/><rect y="8.500" width="24" height="7" fill="#3a3d96"/><rect y="16" width="24" height="7" fill="#1f7a3c"/><path d="M3 1v22M21 1v22" stroke="#e0b040" stroke-width="1.500"/><rect x="8" y="4" width="8" height="19" fill="#c98024"/><rect x="9" y="11" width="6" height="7" fill="#f4f4f4"/><circle cx="12" cy="5" r="3" fill="#e9b040"/></svg></span>
    <span class="pin dot chrome"><svg width="24" height="24" viewBox="0 0 24 24"><circle cx="12" cy="12" r="12" fill="#34a853"/><path d="M12 0a12 12 0 0 1 10.400 6H12a6 6 0 0 0-5.200 3L1.600 6A12 12 0 0 1 12 0z" fill="#ea4335"/><path d="M22.400 6A12 12 0 0 1 12 24l5.200-9a6 6 0 0 0 0-6z" fill="#fbbc05"/><circle cx="12" cy="12" r="5.500" fill="#fff"/><circle cx="12" cy="12" r="4.500" fill="#4285f4"/></svg><span class="avatar">A</span></span>
  </div>
  <div class="tb-sep"></div>
  <span class="xl-tile"><svg width="24" height="22" viewBox="0 0 24 22"><path d="M0 3 13 0v22L0 19z" fill="#1d7044"/><rect x="13" y="3" width="10" height="16" fill="none" stroke="#cfe8da"/><path d="M13 7h10M13 11h10M13 15h10M18 3v16" stroke="#cfe8da"/><text class="xt" x="6.500" y="15">X</text></svg></span>
  <span class="more">•••</span>
  <div class="tray">
    <svg class="t-a" width="12" height="7" viewBox="0 0 12 7"><path d="M1 6l5-5 5 5" fill="none" stroke="#f2f2f2" stroke-width="1.500"/></svg>
    <svg class="t-b" width="17" height="13" viewBox="0 0 17 13"><path d="M3 12a3 3 0 0 1 0-6 5 5 0 0 1 9-2 4 4 0 0 1 2 8z" fill="#8a8a8a"/><path d="M2 0l13 13" stroke="#eee"/></svg>
    <span class="t-sync"><svg width="18" height="18" viewBox="0 0 18 18"><path d="M1 8A7 7 0 0 1 14 4.500M16 10a7 7 0 0 1-12 3.500M14.500 1v4h-4M3 17v-4h4" fill="none" stroke="#f2f2f2" stroke-width="1"/></svg><i></i></span>
    <span class="lang">ENG<br>IN</span>
    <svg class="t-w" width="16" height="13" viewBox="0 0 16 13"><path d="M.5 4.500a11 11 0 0 1 15 0M3 7a7.500 7.500 0 0 1 10 0M5.500 9.500a4 4 0 0 1 5 0" fill="none" stroke="#f2f2f2" stroke-width="1.100"/><circle cx="8" cy="11.500" r="1.200" fill="#f2f2f2"/></svg>
    <svg class="t-v" width="16" height="13" viewBox="0 0 16 13"><path d="M.5 4.500h2.500L7 1v11L3 8.500H.5z" fill="none" stroke="#f2f2f2"/><path d="M9 4.500a3 3 0 0 1 0 4M11 2.500a6 6 0 0 1 0 8" fill="none" stroke="#f2f2f2"/><path d="M13.500 1a9 9 0 0 1 0 11" fill="none" stroke="#555"/></svg>
    <svg class="t-p" width="17" height="13" viewBox="0 0 17 13"><rect x="3.500" y="3.500" width="11" height="8" fill="none" stroke="#f2f2f2"/><rect x="15" y="6" width="1.500" height="3" fill="#f2f2f2"/><path d="M1 12c0-5 2-10 5-12 2 3 2 8-1 12z" fill="#f2f2f2"/></svg>
    <span class="clock">21:01<br>28-05-2025</span>
  </div>
</footer>

</div>
</body>
</html>
```

FILE: styles.css
```css
* { box-sizing: border-box; }
html, body { margin: 0; padding: 0; }
body { width: 1366px; height: 768px; overflow: hidden; font-family: "Noto Sans", "Open Sans", sans-serif; font-size: 11.3px; color: #444; background: #e6e6e6; }
.app { width: 1366px; height: 768px; display: flex; flex-direction: column; }
svg { display: block; flex: none; }
i { display: block; font-style: normal; }

/* title bar */
.titlebar { height: 35px; background: #217346; display: grid; grid-template-columns: 1fr auto 1fr; align-items: center; color: #fff; }
.qat { display: flex; align-items: center; padding-left: 21px; }
.q-undo { margin-left: 14px; }
.q-caret { width: 0; height: 0; border: 3px solid transparent; border-top: 3px solid #fff; border-bottom: 0; margin-left: 3px; }
.q-caret.dim { border-top-color: #5f9c7c; }
.q-redo { margin-left: 10px; }
.q-touch { margin-left: 10px; }
.q-more { margin-left: 16px; margin-top: 3px; }
.doc-title { font-size: 11.3px; }
.winctl { display: grid; grid-template-columns: 46px 46px 46px 46px; justify-items: center; justify-self: end; }

/* ribbon tabs */
.tabs { height: 24px; background: #217346; display: flex; color: #fff; font-size: 11.3px; line-height: 23px; }
.tab { text-align: center; flex: none; width: 58px; }
.tab:nth-child(2) { width: 67px; }
.tab:nth-child(3) { width: 56px; background: #f0f0f0; color: #217346; }
.tab:nth-child(4) { width: 94px; }
.tab:nth-child(5) { width: 78px; }
.tab:nth-child(6) { width: 54px; }
.tab:nth-child(7) { width: 64px; }
.tab:nth-child(8) { width: 56px; }
.tab:nth-child(9) { width: 80px; }
.tab:nth-child(10) { width: 74px; }
.tab:nth-child(11) { width: 88px; }
.tell { margin-left: 17px; height: 23px; display: flex; align-items: center; gap: 6px; color: #d3e6db; }
.signin { margin-left: auto; margin-right: 10px; }
.share { width: 63px; margin-right: 16px; background: #185c37; display: flex; align-items: center; gap: 3px; padding-left: 7px; height: 23px; }

/* ribbon */
.ribbon { height: 93px; background: #f0f0f0; border-bottom: 1px solid #c6c6c6; display: grid; grid-template-columns: 197px 136px 135px 255px 51px 141px 102px 65px 138px 98px 1fr; font-size: 11.3px; line-height: 16px; color: #444; }
.group { display: flex; flex-direction: column; position: relative; }
.group::after { content: ""; position: absolute; right: 0; top: 4px; bottom: 5px; width: 1px; background: #c6c6c6; }
.body { height: 76px; display: flex; align-items: flex-start; }
.glabel { height: 16px; line-height: 16px; text-align: center; color: #666; font-size: 10.8px; }
.big { display: flex; flex-direction: column; align-items: center; text-align: center; padding-top: 6px; flex: none; white-space: nowrap; }
.big .ic { margin-bottom: 3px; height: 32px; overflow: visible; }
.w41 { width: 41px; } .w44 { width: 44px; } .w46 { width: 46px; } .w48 { width: 48px; } .w50 { width: 50px; } .w54 { width: 54px; } .w60 { width: 55px; } .w68 { width: 68px; } .w78 { width: 78px; } .w94 { width: 93px; } .wfull { width: 100%; }
.ofv { margin-left: -1px; }
.sp-col { margin-left: -3px; }
.sp-win { margin-left: 1px; }
.car { width: 0; height: 0; border: 3px solid transparent; border-top: 4px solid #666; border-bottom: 0; flex: none; }
.si { display: flex; align-items: center; gap: 4px; height: 23px; }
.stack { display: flex; flex-direction: column; }
.s-illus { margin-left: 5px; padding-top: 3px; }
.s-illus .si:nth-child(3) { margin-top: 1px; }
.s-addin { padding: 14px 0 0 8px; gap: 16px; width: 112px; flex: none; }
.row-btn { display: flex; align-items: center; gap: 2px; height: 16px; white-space: nowrap; }
.c-addin { margin-left: 12px; }
.s-apps { padding-top: 7px; gap: 7px; }
.mini-grid { display: grid; grid-template-columns: 33px 33px 33px; grid-auto-rows: 23px; width: 99px; padding-top: 3px; flex: none; }
.pc { display: block; }
.c-under { margin: 6px auto 0; }
.c-inl { display: inline-block; margin-left: 3px; vertical-align: 2px; }
.gl-charts { position: relative; padding-right: 20px; }
.launcher { position: absolute; right: 3px; top: 4px; }
.s-text { padding-top: 3px; margin-left: 5px; }
.s-sym { padding: 3px 0 0 8px; width: 100%; }
.sym-row { display: flex; align-items: center; height: 23px; gap: 4px; white-space: nowrap; }
.sym-row .car { margin-left: 9px; }
.glyph { width: 15px; color: #3f78b5; font: bold 20px/23px "Liberation Serif", serif; text-align: center; }
.collapse { display: flex; justify-content: flex-end; align-items: flex-end; padding: 0 10px 5px 0; }
.ques { font: bold 21px "Liberation Sans", sans-serif; fill: #3f78b5; }
.vtxt { font: bold 8px "Liberation Sans", sans-serif; fill: #fff; }
.atxt { font: bold 11px "Liberation Sans", sans-serif; fill: #3f78b5; }

/* formula bar */
.formula { height: 86px; display: flex; align-items: flex-start; padding: 10px 5px 0; background: #e6e6e6; }
.namebox { width: 102px; height: 26px; background: #fff; border: 1px solid #c6c6c6; display: flex; align-items: center; justify-content: space-between; padding: 0 5px 0 7px; font-size: 12px; color: #444; }
.grip { width: 3px; height: 12px; margin: 7px 14px 0 13px; background: radial-gradient(circle, #aaa 1.200px, transparent 1.400px) 0 0 / 3px 4px; }
.fxbox { width: 110px; height: 26px; background: #fff; border: 1px solid #c6c6c6; display: flex; align-items: center; padding-left: 13px; gap: 23px; }
.fx { font: italic bold 14px "Liberation Serif", serif; color: #666; margin-left: -1px; }
.fx small { font-size: 10px; }
.fbar { flex: 1; height: 66px; margin-left: 3px; background: #fff; border: 1px solid #c6c6c6; display: flex; justify-content: flex-end; padding: 9px 5px 0 0; }

/* worksheet */
.workarea { height: 433px; display: flex; }
.sheet { width: 1348px; display: flex; flex-direction: column; }
.colhead { height: 12px; display: flex; background: #e6e6e6; font: 10.500px/12px "Liberation Sans", sans-serif; color: #444; padding-right: 8px; }
.colhead span { width: 40px; text-align: center; border-right: 1px solid #b5b5b5; height: 12px; }
.colhead .corner { width: 20px; position: relative; }
.corner i { position: absolute; right: 2px; bottom: 1px; border: 4px solid transparent; border-right-color: #b5b5b5; border-bottom-color: #b5b5b5; }
.colhead .sel { background: #cfcfcf; border-bottom: 2px solid #217346; color: #217346; line-height: 11px; }
.sheetbody { flex: 1; display: flex; }
.rowhead { width: 20px; flex: none; display: flex; flex-direction: column; background: #e6e6e6; font: 11px/12px "Liberation Sans", sans-serif; color: #333; padding-bottom: 1px; }
.rowhead span { height: 12px; text-align: center; border-bottom: 1px solid #c6c6c6; border-right: 1px solid #c6c6c6; line-height: 12px; }
.rowhead .sel { background: #cfcfcf; color: #217346; border-right: 2px solid #217346; border-bottom: 0; }
.grid-area { flex: 1; display: flex; position: relative; }
.dash { width: 641px; height: 420px; flex: none; background: #000; border: 2px solid #0000d8; position: relative; margin-bottom: 1px; }
.emptygray { flex: 1; height: 420px; background: #a0a0a0; }
.cellsel { position: absolute; left: 640px; top: 407px; width: 41px; height: 13px; border: 2px solid #217346; background: #a0a0a0; }
.cellsel::before { content: ""; position: absolute; inset: 0; border: 1px solid #fff; }
.cellsel i { position: absolute; right: -3px; bottom: -2px; width: 5px; height: 5px; background: #217346; border: 1px solid #fff; }

/* dashboard cards: free canvas, offsets relative to .dash */
.card { position: absolute; border: 1px solid #e60000; background: #000; }
.card svg { position: absolute; left: -1px; top: -1px; width: calc(100% + 2px); height: calc(100% + 2px); overflow: visible; }
.c-type { left: 4px; top: 5px; width: 163px; height: 126px; border-radius: 24px; }
.c-added { left: 4px; top: 141px; width: 163px; height: 126px; border-radius: 24px; }
.c-country { left: 5px; top: 276px; width: 163px; height: 126px; border-radius: 24px; }
.k-tv { left: 175px; top: 10px; width: 58px; height: 56px; border-radius: 9px; }
.banner { left: 243px; top: 10px; width: 135px; height: 56px; border-radius: 10px; display: flex; align-items: center; justify-content: center; }
.k-mov { left: 387px; top: 8px; width: 58px; height: 56px; border-radius: 9px; }
.c-dir { left: 200px; top: 77px; width: 227px; height: 183px; border-radius: 32px; }
.c-year { left: 453px; top: 6px; width: 163px; height: 119px; border-radius: 24px; }
.c-rating { left: 453px; top: 132px; width: 162px; height: 126px; border-radius: 24px; }
.c-genre { left: 204px; top: 273px; width: 219px; height: 130px; border-radius: 24px; }
.kpi { display: flex; flex-direction: column; align-items: center; padding-top: 10px; font-family: "Lato", sans-serif; }
.kpi strong { color: #f00; font-size: 13px; line-height: 16px; font-weight: 900; }
.kpi span { color: #e0e000; font-size: 8.500px; line-height: 16px; }
.k-mov strong { line-height: 18px; margin-top: 3px; }
.k-mov span { color: #c4c400; line-height: 12px; font-weight: 700; }
.banner span { color: #f00; font: bold 26px/1 "Liberation Sans", sans-serif; transform: scaleX(.77); -webkit-text-stroke: .4px #f00; }

.ttl { font: bold 10.800px "Lato", sans-serif; fill: #505050; text-anchor: middle; }
.thin { font-weight: 400; font-size: 10.600px; }
.ax { font: 6.800px "Lato", sans-serif; fill: #484848; }
.end, .end text { text-anchor: end; }
.mid, .mid text { text-anchor: middle; }
.yel { stroke: #ff0; stroke-width: 1; fill: none; }
.wht { stroke: #e8e8e8; stroke-width: 1; fill: none; }
.red { fill: #f00; }

/* slicers */
.slicer { position: absolute; background: #fff; border: 1.500px solid #4f81bd; padding: 0 5px; font: 10px/1 "Liberation Sans", sans-serif; color: #000; }
.s-month { left: 462px; top: 267px; width: 74px; height: 149px; }
.s-yr { left: 542px; top: 266px; width: 73px; height: 73px; }
.sl-head { height: 17px; display: flex; align-items: center; border-bottom: 1.500px solid #4f81bd; margin-bottom: 2px; }
.s-yr .sl-head { height: 16px; margin-bottom: 1px; }
.sl-head b { font-size: 10.500px; width: 27px; }
.ms { width: 15px; height: 13px; display: flex; align-items: center; justify-content: center; border-radius: 2px; }
.ms.on { background: #fbe8a6; border: 1px solid #e3b94f; }
.fl { margin-left: 6px; }
.s-month ul, .s-yr ul { list-style: none; margin: 0; padding: 0; display: flex; flex-direction: column; }
.s-month ul { width: 48px; gap: 2px; }
.s-month li { height: 9px; line-height: 9px; }
.s-yr ul { gap: 2px; }
.s-yr li { height: 7px; line-height: 7px; }
.s-yr b { width: 29px; }
.s-yr .fl { margin-left: 5px; }
.slicer li { background: #b8cce4; border: 1px solid #8a8a8a; border-radius: 5px; padding-left: 6px; white-space: nowrap; }
.sl-body { display: flex; justify-content: space-between; }
.sl-scroll { width: 11px; height: 123px; background: #f0f0f0; position: relative; }
.sl-scroll i { position: absolute; left: 5px; top: 21px; width: 1px; height: 90px; background: #888; }

/* scrollbars */
.vscroll { flex: 1; display: flex; flex-direction: column; background: #e6e6e6; padding: 2px 4px 0 0; }
.sb-btn { width: 15px; height: 15px; flex: none; background: #fff; border: 1px solid #ababab; display: flex; align-items: center; justify-content: center; }
.vscroll .sb-thumb { width: 15px; height: 379px; margin-bottom: 23px; background: #fff; border: solid #ababab; border-width: 0 1px 1px; }
.tri { width: 0; height: 0; border: 4px solid transparent; }
.tri.up { border-bottom-color: #666; border-top: 0; }
.tri.down { border-top-color: #666; border-bottom: 0; }
.tri.left { border-right-color: #666; border-left: 0; }
.tri.right { border-left-color: #666; border-right: 0; }
.tri.dim.left { border-right-color: #c0c0c0; }
.tri.dim.right { border-left-color: #c0c0c0; }

/* sheet tabs */
.sheettabs { height: 28px; background: #e6e6e6; border-bottom: 1px solid #c6c6c6; display: flex; align-items: flex-start; font-size: 12.300px; }
.nav { width: 100px; height: 24px; display: flex; align-items: center; gap: 25px; padding-left: 26px; flex: none; }
.stab { height: 20px; margin-top: 4px; line-height: 18px; text-align: center; flex: none; color: #444; }
.stab.first { width: 90px; border-left: 1px solid #999; }
.stab.active { width: 91px; height: 25px; margin-top: 0; line-height: 25px; background: #fff; color: #217346; font-weight: 700; border-bottom: 2px solid #217346; }
.stab.last { width: 56px; border-right: 1px solid #999; }
.plus { margin: 5px 0 0 33px; }
.tabgrip { margin: 8px 0 0 432px; }
.hscroll { display: flex; margin: 6px 0 0 15px; height: 15px; }
.hscroll .sb-thumb { width: 464px; background: #fff; border: solid #ababab; border-width: 1px 1px 1px 0; }
.sb-rest { width: 15px; background: #dcdcdc; }

/* status bar */
.status { height: 21px; background: #f0f0f0; display: flex; align-items: center; padding-left: 7px; font-size: 11.500px; color: #555; }
.ready { width: 50px; }
.views { margin-left: auto; display: flex; height: 21px; }
.view { width: 39px; display: flex; align-items: center; justify-content: center; }
.view:first-child { padding-left: 2px; }
.view.on { background: #c6c6c6; }

/* taskbar */
.taskbar { height: 48px; background: #1c1c1c; display: flex; align-items: center; color: #f2f2f2; border-top: 1px solid #3a3a3a; }
.weather { position: relative; width: 152px; padding-left: 20px; flex: none; }
.badge { position: absolute; left: 31px; top: -6px; width: 16px; height: 16px; border-radius: 50%; background: #f79aa0; color: #111; font-size: 10.500px; line-height: 16px; text-align: center; }
.pins { display: flex; }
.pin { width: 44px; height: 40px; display: flex; align-items: center; justify-content: center; position: relative; flex: none; }
.dot::after { content: ""; position: absolute; bottom: 0; left: 19px; width: 6px; height: 3px; border-radius: 2px; background: #9a9a9a; }
.hp { width: 24px; height: 24px; background: #0f97d8; color: #fff; font: italic 9px/24px "Liberation Sans", sans-serif; text-align: center; overflow: hidden; }
.avatar { position: absolute; left: 26px; top: 1px; width: 16px; height: 16px; border-radius: 50%; background: #6a1f9e; color: #e8d8f5; font-size: 9.500px; line-height: 16px; text-align: center; }
.tm { font: bold 10px "Liberation Sans", sans-serif; fill: #fff; text-anchor: middle; }
.nt { font: bold 12px "Liberation Sans", sans-serif; fill: #fff; text-anchor: middle; }
.xt { font: bold 11px "Liberation Sans", sans-serif; fill: #fff; text-anchor: middle; }
.tb-sep { width: 1px; height: 47px; background: #555; margin: 0 4px 0 2px; flex: none; }
.xl-tile { width: 40px; height: 40px; border-radius: 4px; background: #2d2d2d; display: flex; align-items: center; justify-content: center; position: relative; flex: none; }
.xl-tile::after { content: ""; position: absolute; bottom: 1px; left: 12px; width: 16px; height: 3px; border-radius: 2px; background: #d8a0e0; }
.more { margin-left: 15px; font-size: 11px; letter-spacing: 1.500px; width: 22px; }
.tray { margin-left: auto; display: flex; align-items: center; padding-right: 19px; }
.t-a { margin-right: 17px; }
.t-b { margin-right: 15px; }
.t-sync { position: relative; margin-right: 11px; width: 18px; }
.t-sync i { position: absolute; right: -2px; bottom: -2px; width: 8px; height: 8px; border-radius: 50%; background: #f00; }
.lang { width: 36px; font-size: 11.500px; line-height: 16px; text-align: center; margin-right: 11px; }
.t-w { margin-right: 8px; }
.t-v { margin-right: 8px; }
.t-p { margin-right: 7px; }
.clock { width: 72px; text-align: right; font-size: 11.800px; line-height: 16px; }
```
